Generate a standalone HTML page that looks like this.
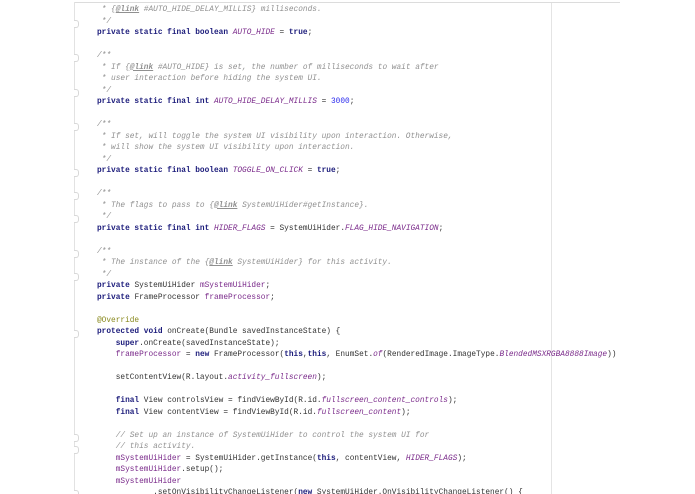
<!DOCTYPE html>
<html><head><meta charset="utf-8"><style>
html,body{margin:0;padding:0;background:#fff;width:695px;height:494px;overflow:hidden;position:relative}
.top{position:absolute;left:74px;top:2px;width:546px;height:1px;background:#dcdcdc}
.lft{position:absolute;left:74px;top:2px;width:1px;height:492px;background:#e2e2e2}
.rm{position:absolute;left:551px;top:3px;width:1px;height:491px;background:#e4e4e4}
pre{position:absolute;left:97px;top:5px;margin:0;font-family:"Liberation Mono",monospace;font-size:7.8px;line-height:11.5px;color:#333;}
.k{color:#1a1a7a;font-weight:bold}
.c{color:#7a2a8a;font-style:italic}
.m{color:#909090;font-style:italic}
.f{color:#7a2a8a}
.n{color:#2a2aee}
.a{color:#8a8a20}
.l{text-decoration:underline;font-weight:bold}
.fold{position:absolute;left:74px;width:4px;height:6px;border:1px solid #d8d8d8;border-left:none;border-radius:0 3px 3px 0;background:#fff}
</style></head><body>
<div class="top"></div><div class="lft"></div><div class="rm"></div>
<div class="fold" style="top:20px"></div>
<div class="fold" style="top:54px"></div>
<div class="fold" style="top:89px"></div>
<div class="fold" style="top:123px"></div>
<div class="fold" style="top:169px"></div>
<div class="fold" style="top:192px"></div>
<div class="fold" style="top:215px"></div>
<div class="fold" style="top:250px"></div>
<div class="fold" style="top:273px"></div>
<div class="fold" style="top:330px"></div>
<div class="fold" style="top:434px"></div>
<div class="fold" style="top:446px"></div>
<div class="fold" style="top:490px"></div>
<pre><span class="m"> * {<span class="l">@link</span> #AUTO_HIDE_DELAY_MILLIS} milliseconds.</span>
<span class="m"> */</span>
<span class="k">private static final boolean</span> <span class="c">AUTO_HIDE</span> = <span class="k">true</span>;

<span class="m">/**</span>
<span class="m"> * If {<span class="l">@link</span> #AUTO_HIDE} is set, the number of milliseconds to wait after</span>
<span class="m"> * user interaction before hiding the system UI.</span>
<span class="m"> */</span>
<span class="k">private static final int</span> <span class="c">AUTO_HIDE_DELAY_MILLIS</span> = <span class="n">3000</span>;

<span class="m">/**</span>
<span class="m"> * If set, will toggle the system UI visibility upon interaction. Otherwise,</span>
<span class="m"> * will show the system UI visibility upon interaction.</span>
<span class="m"> */</span>
<span class="k">private static final boolean</span> <span class="c">TOGGLE_ON_CLICK</span> = <span class="k">true</span>;

<span class="m">/**</span>
<span class="m"> * The flags to pass to {<span class="l">@link</span> SystemUiHider#getInstance}.</span>
<span class="m"> */</span>
<span class="k">private static final int</span> <span class="c">HIDER_FLAGS</span> = SystemUiHider.<span class="c">FLAG_HIDE_NAVIGATION</span>;

<span class="m">/**</span>
<span class="m"> * The instance of the {<span class="l">@link</span> SystemUiHider} for this activity.</span>
<span class="m"> */</span>
<span class="k">private</span> SystemUiHider <span class="f">mSystemUiHider</span>;
<span class="k">private</span> FrameProcessor <span class="f">frameProcessor</span>;

<span class="a">@Override</span>
<span class="k">protected void</span> onCreate(Bundle savedInstanceState) {
    <span class="k">super</span>.onCreate(savedInstanceState);
    <span class="f">frameProcessor</span> = <span class="k">new</span> FrameProcessor(<span class="k">this</span>,<span class="k">this</span>, EnumSet.<span class="c">of</span>(RenderedImage.ImageType.<span class="c">BlendedMSXRGBA8888Image</span>))

    setContentView(R.layout.<span class="c">activity_fullscreen</span>);

    <span class="k">final</span> View controlsView = findViewById(R.id.<span class="c">fullscreen_content_controls</span>);
    <span class="k">final</span> View contentView = findViewById(R.id.<span class="c">fullscreen_content</span>);

    <span class="m">// Set up an instance of SystemUiHider to control the system UI for</span>
    <span class="m">// this activity.</span>
    <span class="f">mSystemUiHider</span> = SystemUiHider.getInstance(<span class="k">this</span>, contentView, <span class="c">HIDER_FLAGS</span>);
    <span class="f">mSystemUiHider</span>.setup();
    <span class="f">mSystemUiHider</span>
            .setOnVisibilityChangeListener(<span class="k">new</span> SystemUiHider.OnVisibilityChangeListener() {</pre>
</body></html>
